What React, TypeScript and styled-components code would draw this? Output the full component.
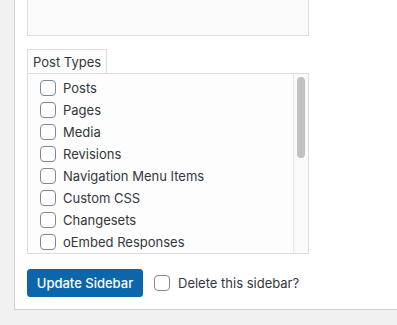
import React from 'react';
import styled, { createGlobalStyle } from 'styled-components';

const GlobalStyle = createGlobalStyle`
    html, body {
        margin: 0;
        padding: 0;
        background: #f1f1f1;
    }
    body {
        font-family: Inter, "Liberation Sans", sans-serif;
        font-size: 13px;
        color: #32373c;
    }
`;

const postTypes = [
    'Posts',
    'Pages',
    'Media',
    'Revisions',
    'Navigation Menu Items',
    'Custom CSS',
    'Changesets',
    'oEmbed Responses',
];

export default function App() {
    return (
        <Page>
            <GlobalStyle />
            <Panel>
                <Textarea />
                <Tabs>
                    <Tab>Post Types</Tab>
                </Tabs>
                <ListBox>
                    <List>
                        {postTypes.map((name) => (
                            <Row key={name}>
                                <Check type="checkbox" />
                                {name}
                            </Row>
                        ))}
                    </List>
                    <Scrollbar>
                        <Thumb />
                    </Scrollbar>
                </ListBox>
                <Actions>
                    <PrimaryButton>Update Sidebar</PrimaryButton>
                    <DeleteLabel>
                        <Check type="checkbox" />
                        Delete this sidebar?
                    </DeleteLabel>
                </Actions>
            </Panel>
        </Page>
    );
}

const Page = styled.div`
    width: 397px;
    height: 325px;
    overflow: hidden;
    padding-left: 14px;
    box-sizing: border-box;
`;

const Panel = styled.div`
    background: #fff;
    border-left: 1px solid #ccd0d4;
    border-bottom: 1px solid #ccd0d4;
    padding: 0 0 12px 12px;
    width: 400px;
    box-sizing: border-box;
`;

const Textarea = styled.div`
    width: 282px;
    height: 36px;
    box-sizing: border-box;
    background: #fafafa;
    border: 1px solid #ddd;
    border-top: none;
`;

const Tabs = styled.div`
    display: flex;
    margin-top: 13px;
`;

const Tab = styled.div`
    height: 24px;
    box-sizing: border-box;
    padding: 0 5px;
    border: 1px solid #ddd;
    border-bottom: none;
    background: #fdfdfd;
    line-height: 24px;
    font-size: 13px;
`;

const ListBox = styled.div`
    width: 282px;
    height: 181px;
    box-sizing: border-box;
    border: 1px solid #ddd;
    background: #fdfdfd;
    display: flex;
    overflow: hidden;
`;

const List = styled.ul`
    flex: 1;
    margin: 0;
    padding: 3px 0 0 12px;
    list-style: none;
`;

const Row = styled.li`
    display: flex;
    align-items: center;
    height: 22px;
    gap: 7px;
    white-space: nowrap;
`;

const Check = styled.input`
    appearance: none;
    margin: 0;
    width: 16px;
    height: 16px;
    box-sizing: border-box;
    border: 1px solid #7e8993;
    border-radius: 4px;
    background: #fff;
    flex: none;
`;

const Scrollbar = styled.div`
    width: 15px;
    flex: none;
    border-left: 1px solid #e8e8e8;
    background: #fafafa;
    padding: 3px 0 0 3px;
    box-sizing: border-box;
`;

const Thumb = styled.div`
    width: 8px;
    height: 81px;
    border-radius: 4px;
    background: #c1c1c1;
`;

const Actions = styled.div`
    display: flex;
    align-items: center;
    margin-top: 15px;
    gap: 11px;
`;

const PrimaryButton = styled.button`
    height: 28px;
    width: 116px;
    padding: 0;
    border: 1px solid #0b64a9;
    border-radius: 3px;
    background: #0b66ad;
    color: #fff;
    font-family: inherit;
    font-size: 13px;
    font-weight: 500;
`;

const DeleteLabel = styled.label`
    display: flex;
    align-items: center;
    gap: 8px;
`;
